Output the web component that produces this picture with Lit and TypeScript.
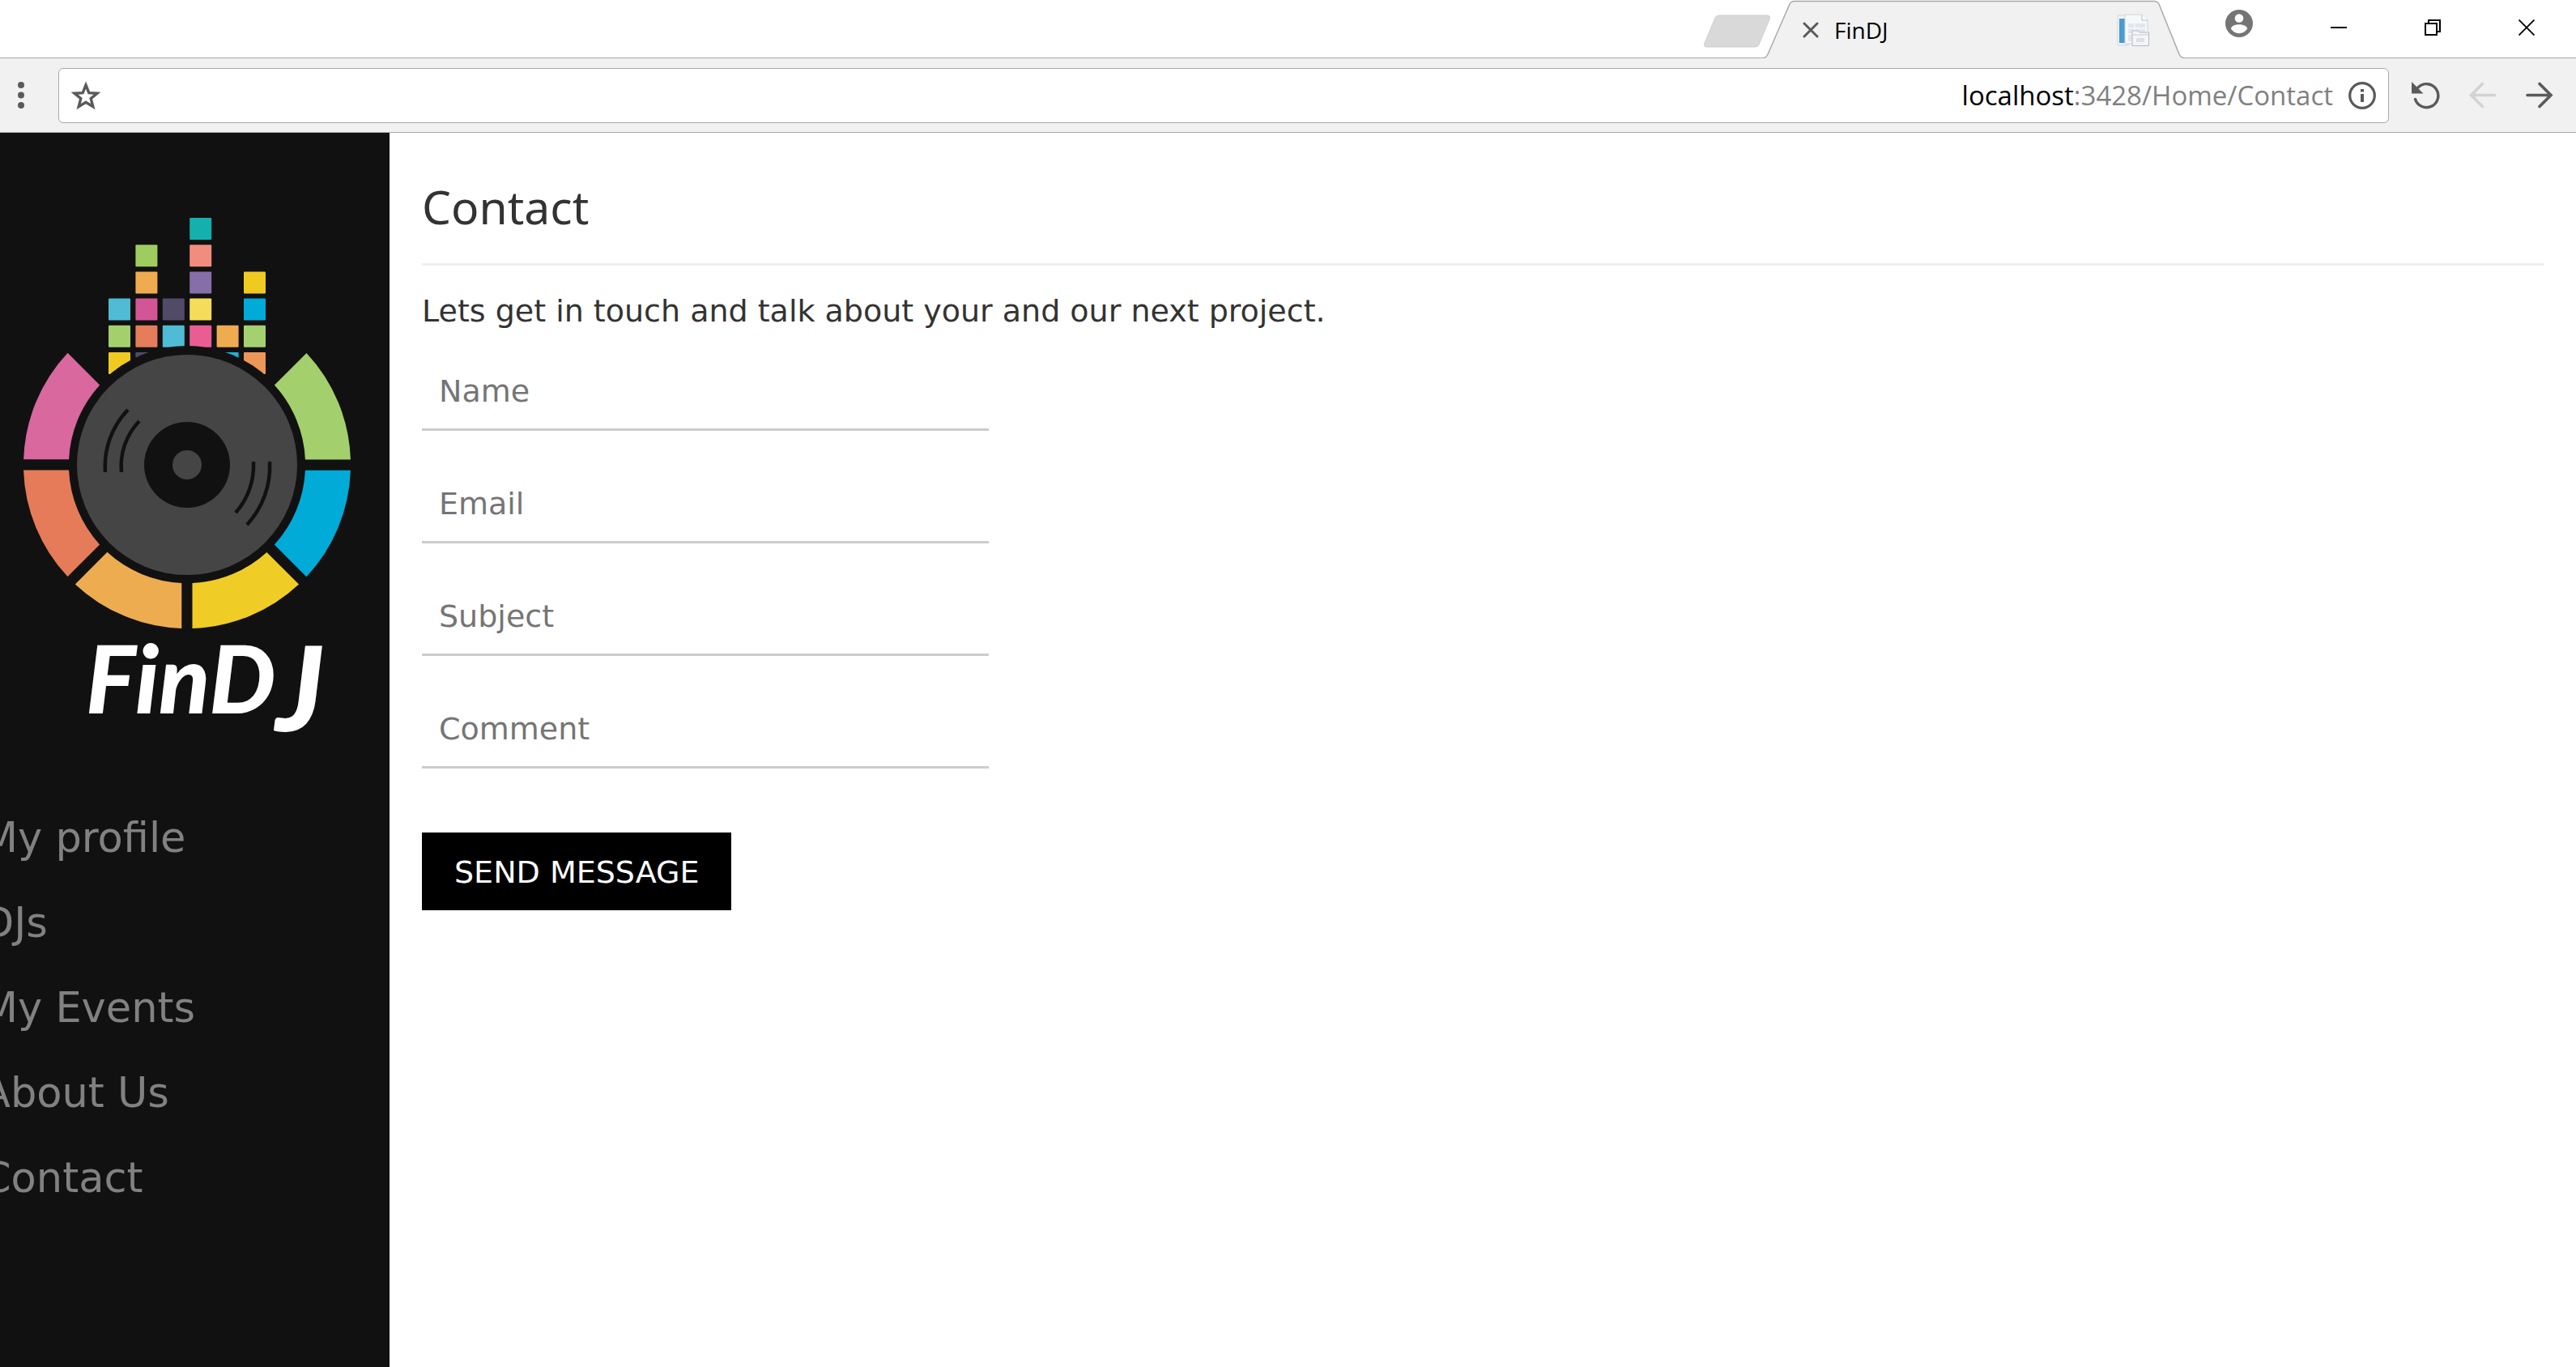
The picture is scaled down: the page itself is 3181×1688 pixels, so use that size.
import { LitElement, html, svg, css } from "lit";
import { customElement, state } from "lit/decorators.js";

/** Equalizer blocks: column, row, colour. */
const BLOCKS: Array<[number, number, string]> = [
  [3, 0, "#14b0ad"],
  [1, 1, "#9fcc5f"],
  [3, 1, "#f18d7f"],
  [1, 2, "#eeab50"],
  [3, 2, "#866fa9"],
  [5, 2, "#efcb22"],
  [0, 3, "#4fbbd4"],
  [1, 3, "#d25695"],
  [2, 3, "#514b68"],
  [3, 3, "#f5dd5b"],
  [5, 3, "#00abd8"],
  [0, 4, "#a3cf6d"],
  [1, 4, "#e57c5a"],
  [2, 4, "#4fbbd4"],
  [3, 4, "#ea5d93"],
  [4, 4, "#eeab50"],
  [5, 4, "#a5d070"],
  [0, 5, "#efcb22"],
  [1, 5, "#514b68"],
  [4, 5, "#1fb2dd"],
  [5, 5, "#ec9657"],
];

/** Ring segments: rotation in degrees, colour. */
const SEGMENTS: Array<[number, string]> = [
  [-45, "#a3cf6d"],
  [0, "#00abd8"],
  [45, "#f0cd26"],
  [90, "#eeac51"],
  [135, "#e57b59"],
  [180, "#d8689d"],
];

@customElement("findj-logo")
export class FindjLogo extends LitElement {
  static styles = css`
    :host {
      display: block;
    }
    .logo {
      display: block;
      width: 100%;
    }
    .wordmark {
      font-family: Lato, "Open Sans", sans-serif;
      font-size: 116px;
      font-weight: 900;
      font-style: italic;
    }
    .tall {
      font-size: 144px;
    }
  `;

  render() {
    return html`
      <svg class="logo" viewBox="0 0 481 816" role="img" aria-label="FinDJ">
        ${BLOCKS.map(
          ([col, row, fill]) => svg`<rect
            x=${134 + col * 33.4}
            y=${105 + row * 33.2}
            width="27"
            height="27"
            rx="1"
            fill=${fill}
          />`
        )}
        <g transform="translate(231 410)">
          <circle r="147" fill="#111" />
          ${SEGMENTS.map(
            ([angle, fill]) => svg`<path
              d="M201.9 6.7A202 202 0 0 1 147.4 138.2L107.8 98.6A146 146 0 0 0 145.9 6.7Z"
              transform=${`rotate(${angle})`}
              fill=${fill}
            />`
          )}
          <circle r="136" fill="#454545" />
          <circle r="53" fill="#111" />
          <circle r="18" fill="#454545" />
          <g fill="none" stroke="#111" stroke-width="4.5">
            <path d="M-73-68A100 100 0 0 0-101 9" />
            <path d="M-59-54A80 80 0 0 0-81 9" />
            <path d="M102-4A106 106 0 0 1 74 74" />
            <path d="M82-4A88 88 0 0 1 60 59" />
          </g>
        </g>
        <text class="wordmark" x="106" y="717" fill="#fff">FinD<tspan class="tall" dy="22">J</tspan></text>
      </svg>
    `;
  }
}

@customElement("browser-bar")
export class BrowserBar extends LitElement {
  static styles = css`
    :host {
      display: block;
      font-family: "Open Sans", "Noto Sans", sans-serif;
      color: #000;
    }
    svg {
      display: block;
    }
    button {
      display: block;
      padding: 0;
      border: 0;
      background: none;
    }
    .strip {
      display: flex;
      justify-content: flex-end;
      height: 71px;
      background: #fff;
      border-bottom: 1px solid #a9a9a9;
    }
    .newtab {
      align-self: flex-start;
      padding-top: 18px;
    }
    .tab {
      position: relative;
      display: flex;
      align-items: center;
      box-sizing: border-box;
      width: 520px;
      height: 72px;
      margin-left: -9px;
      padding: 2px 44px 0 48px;
    }
    .tabshape {
      position: absolute;
      left: 0;
      top: 0;
    }
    .tab > .close,
    .tab > .title,
    .tab > .favicon {
      position: relative;
    }
    .title {
      flex: 1;
      margin-left: 19px;
      font-size: 28px;
      line-height: 36px;
    }
    .window {
      display: flex;
      gap: 96px;
      align-items: flex-start;
      padding: 12px 51px 0 50px;
    }
    .wc {
      padding-top: 12px;
    }
    .toolbar {
      display: flex;
      align-items: center;
      height: 91px;
      background: #f1f1f1;
      border-bottom: 1px solid #a9a9a9;
    }
    .menu {
      padding: 0 42px 0 22px;
    }
    .omnibox {
      flex: 1;
      display: flex;
      align-items: center;
      box-sizing: border-box;
      height: 68px;
      padding: 0 15px 0 14px;
      background: #fff;
      border: 1px solid #a9a9a9;
      border-radius: 6px;
    }
    .address {
      flex: 1;
      min-width: 0;
      height: 60px;
      margin: 0 16px;
      padding: 0;
      border: 0;
      outline: 0;
      background: none;
      font: inherit;
      font-size: 33px;
      text-align: right;
    }
    .url {
      font-size: 33px;
      line-height: 46px;
      margin-right: 19px;
      white-space: nowrap;
    }
    .path {
      color: #808080;
    }
    .nav {
      display: flex;
      align-items: center;
      gap: 36px;
      padding: 0 28px 0 28px;
    }
  `;

  render() {
    return html`
      <div class="strip">
        <button class="newtab" aria-label="New tab">
          <svg width="84" height="41" viewBox="0 0 84 41">
            <path
              d="M20 1H79Q84 1 82 6L69 37Q68 40 64 40H5Q0 40 2 35L15 4Q16 1 20 1Z"
              fill="#d9d9d9"
              stroke="#cfcfcf"
            />
          </svg>
        </button>
        <div class="tab">
          <svg class="tabshape" width="520" height="72" viewBox="0 0 520 72">
            <path
              d="M0 72V71.500Q3 71.500 5 67L32 5Q34 1.500 38 1.500H482Q486 1.500 488 5L513 67Q515 71.500 519 71.500V72Z"
              fill="#f1f1f1"
            />
            <path
              d="M0 71.500Q3 71.500 5 67L32 5Q34 1.500 38 1.500H482Q486 1.500 488 5L513 67Q515 71.500 519 71.500"
              fill="none"
              stroke="#a9a9a9"
              stroke-width="1.500"
            />
          </svg>
          <button class="close" aria-label="Close tab">
            <svg width="20" height="20" viewBox="0 0 20 20">
              <path d="M2 2L18 18M18 2L2 18" stroke="#5a5a5a" stroke-width="3" stroke-linecap="round" />
            </svg>
          </button>
          <span class="title">FinDJ</span>
          <svg class="favicon" width="40" height="40" viewBox="0 0 40 40">
            <path d="M1 2H14V39H1Z" fill="#eef3f7" stroke="#cfd8df" />
            <path d="M3 6H10V36H3Z" fill="#4b9bd0" />
            <path d="M10 1H31L38 8V37H10Z" fill="#f6f8fa" stroke="#cdd3d8" />
            <path d="M31 1V8H38" fill="#fff" stroke="#b9bfc4" />
            <path d="M14 12H35V34H14Z" fill="#e3e6ec" />
            <path d="M14 18H35M14 25H35M22 12V34" stroke="#f6f8fa" stroke-width="1.500" />
            <path d="M19 21H26L28 23H39.500V39.500H19Z" fill="#f4f5f8" stroke="#b4b8bd" />
            <path d="M20 26H39" stroke="#c4c8cc" />
            <path d="M24 30H34V35H24Z" fill="#dcdfe6" />
          </svg>
        </div>
        <div class="window">
          <button aria-label="Profile">
            <svg width="34" height="34" viewBox="0 0 34 34">
              <circle cx="17" cy="17" r="17" fill="#757575" />
              <circle cx="17" cy="10.500" r="5.300" fill="#fff" />
              <path d="M7 23.500C7 20 12.500 18.300 17 18.300S27 20 27 23.500C25 27 21 29.200 17 29.200S9 27 7 23.500Z" fill="#fff" />
            </svg>
          </button>
          <button class="wc" aria-label="Minimize">
            <svg width="20" height="20" viewBox="0 0 20 20">
              <path d="M0 10H20" stroke="#000" stroke-width="2" />
            </svg>
          </button>
          <button class="wc" aria-label="Restore">
            <svg width="20" height="20" viewBox="0 0 20 20">
              <path d="M1 5H15V19H1ZM5 5V1H19V15H15" fill="none" stroke="#000" stroke-width="2" />
            </svg>
          </button>
          <button class="wc" aria-label="Close">
            <svg width="20" height="20" viewBox="0 0 20 20">
              <path d="M.5.5L19.500 19.500M19.500.5L.5 19.500" stroke="#000" stroke-width="1.800" />
            </svg>
          </button>
        </div>
      </div>
      <div class="toolbar">
        <button class="menu" aria-label="Menu">
          <svg width="8" height="33" viewBox="0 0 8 33">
            <g fill="#5a5a5a">
              <circle cx="4" cy="4" r="4" />
              <circle cx="4" cy="16.500" r="4" />
              <circle cx="4" cy="29" r="4" />
            </g>
          </svg>
        </button>
        <div class="omnibox">
          <button aria-label="Bookmark this page">
            <svg width="38" height="36" viewBox="0 0 38 36">
              <path
                d="M19 5L22.800 14.600L33 15.200L25.200 21.600L27.800 31.600L19 26.200L10.200 31.600L12.800 21.600L5 15.200L15.200 14.600Z"
                fill="none"
                stroke="#5a5a5a"
                stroke-width="3.400"
              />
            </svg>
          </button>
          <input class="address" id="address" type="text" autocomplete="off" />
          <label class="url" for="address">localhost<span class="path">:3428/Home/Contact</span></label>
          <button aria-label="View site information">
            <svg width="34" height="34" viewBox="0 0 34 34">
              <circle cx="17" cy="17" r="15.300" fill="none" stroke="#5a5a5a" stroke-width="3.200" />
              <path d="M15 9H19V12.500H15ZM15 15H19V25H15Z" fill="#5a5a5a" />
            </svg>
          </button>
        </div>
        <div class="nav">
          <button aria-label="Reload">
            <svg width="35" height="34" viewBox="0 0 35 34">
              <path d="M4.500 21.500A14.500 14.500 0 1 0 8 7" fill="none" stroke="#5a5a5a" stroke-width="3.400" stroke-linecap="round" />
              <path d="M0 0V14.500H14.500Z" fill="#5a5a5a" />
            </svg>
          </button>
          <button aria-label="Back" disabled>
            <svg width="34" height="34" viewBox="0 0 34 34">
              <path d="M31.500 16.500H3M16.500 2.500L2.500 16.500L16.500 30.500" fill="none" stroke="#d2d2d2" stroke-width="3.600" stroke-linecap="round" />
            </svg>
          </button>
          <button aria-label="Forward">
            <svg width="34" height="34" viewBox="0 0 34 34">
              <path d="M2 16.500H30.500M17 2.500L31 16.500L17 30.500" fill="none" stroke="#5a5a5a" stroke-width="3.600" stroke-linecap="round" />
            </svg>
          </button>
        </div>
      </div>
    `;
  }
}

@customElement("contact-page")
export class ContactPage extends LitElement {
  static styles = css`
    :host {
      display: block;
      padding: 51px 40px 40px;
      color: #333;
      font-family: Verdana, "DejaVu Sans", sans-serif;
      font-size: 38px;
      line-height: 60px;
    }
    .heading {
      margin: 0;
      font-family: "Segoe UI", "Noto Sans", sans-serif;
      font-size: 57px;
      font-weight: 400;
      line-height: 80px;
    }
    .rule {
      margin: 30px 0 26px;
      border: 0;
      border-top: 3px solid #eee;
    }
    .lead {
      margin: 0 0 25px;
    }
    .form {
      display: flex;
      flex-direction: column;
      align-items: flex-start;
      gap: 46px;
    }
    .field {
      box-sizing: border-box;
      display: block;
      width: 700px;
      max-width: 100%;
      height: 93px;
      margin: 0;
      padding: 20px 21px 22px;
      border: 0;
      border-bottom: 3px solid #ccc;
      border-radius: 0;
      outline: 0;
      background: none;
      color: #333;
      font: inherit;
      line-height: 48px;
    }
    .field::placeholder {
      color: #757575;
      opacity: 1;
    }
    .send {
      margin: 33px 0 0;
      padding: 19px 40px 17px;
      border: 0;
      background: #000;
      color: #fff;
      font: inherit;
      text-transform: uppercase;
    }
  `;

  private fields = ["Name", "Email", "Subject", "Comment"];

  render() {
    return html`
      <h3 class="heading">Contact</h3>
      <hr class="rule" />
      <p class="lead">Lets get in touch and talk about your and our next project.</p>
      <form class="form" @submit=${(e: Event) => e.preventDefault()}>
        ${this.fields.map(
          (name) => html`<input
            class="field"
            type=${name === "Email" ? "email" : "text"}
            name=${name}
            aria-label=${name}
            placeholder=${name}
          />`
        )}
        <button class="send" type="submit">Send message</button>
      </form>
    `;
  }
}

@customElement("app-root")
export class AppRoot extends LitElement {
  static styles = css`
    :host {
      display: flex;
      flex-direction: column;
      min-height: 100vh;
      background: #fff;
    }
    .page {
      flex: 1;
      display: flex;
    }
    .sidebar {
      flex: none;
      width: 481px;
      overflow: hidden;
      background: #111;
    }
    .links {
      display: flex;
      flex-direction: column;
      margin-left: -22px;
      padding-top: 2px;
    }
    .link {
      padding: 21px 0;
      color: #818181;
      font-family: Verdana, "DejaVu Sans", sans-serif;
      font-size: 51px;
      line-height: 63px;
      text-decoration: none;
    }
    .content {
      flex: 1;
      min-width: 0;
    }
  `;

  @state() private links = ["My profile", "DJs", "My Events", "About Us", "Contact"];

  render() {
    return html`
      <browser-bar></browser-bar>
      <div class="page">
        <aside class="sidebar">
          <findj-logo></findj-logo>
          <nav class="links">
            ${this.links.map((text) => html`<a class="link" href="#">${text}</a>`)}
          </nav>
        </aside>
        <main class="content"><contact-page></contact-page></main>
      </div>
    `;
  }
}
